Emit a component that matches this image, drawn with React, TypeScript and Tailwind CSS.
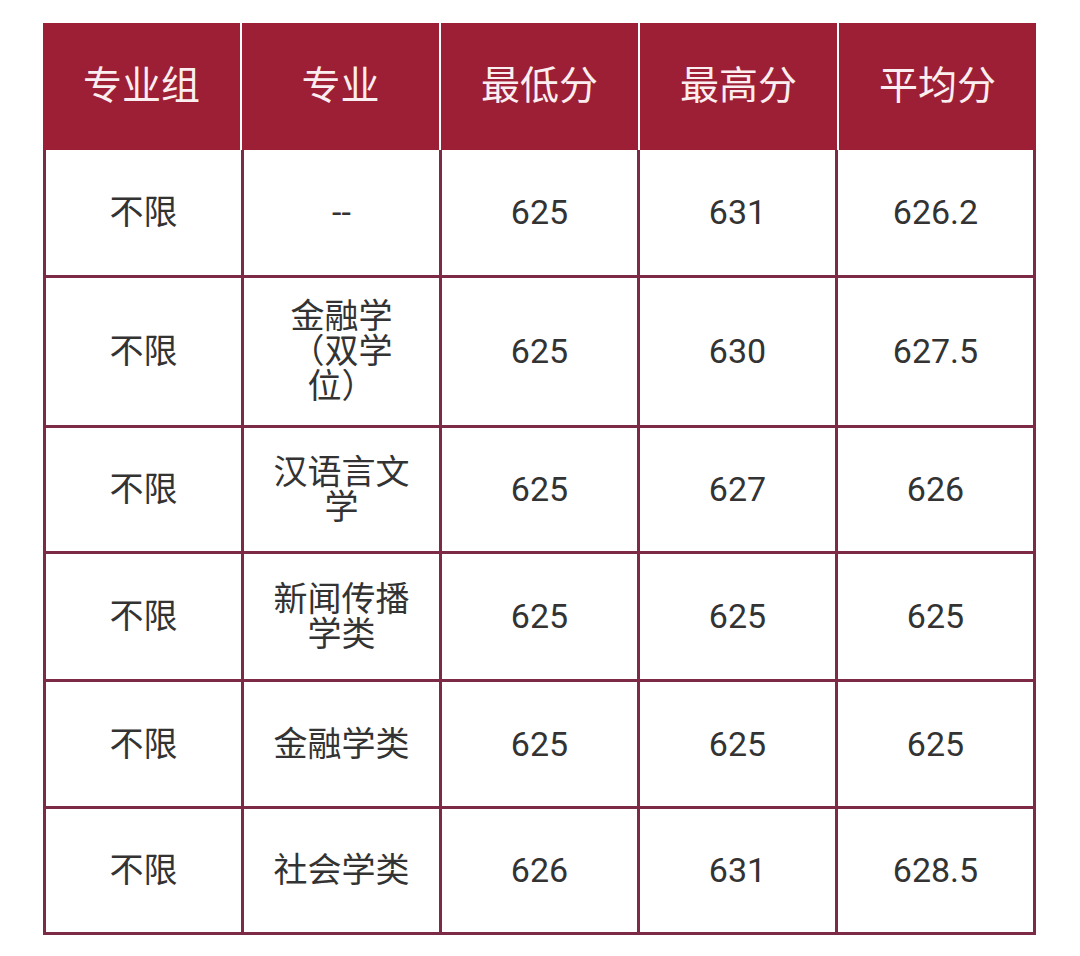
const headers = ["专业组", "专业", "最低分", "最高分", "平均分"];

const rows = [
  { h: "h-[125px]", cells: ["不限", "--", "625", "631", "626.2"] },
  { h: "h-[147px]", cells: ["不限", "金融学（双学位）", "625", "630", "627.5"] },
  { h: "h-[123px]", cells: ["不限", "汉语言文学", "625", "627", "626"] },
  { h: "h-[125px]", cells: ["不限", "新闻传播学类", "625", "625", "625"] },
  { h: "h-[124px]", cells: ["不限", "金融学类", "625", "625", "625"] },
  { h: "h-[123px]", cells: ["不限", "社会学类", "626", "631", "628.5"] },
];

export default function App() {
  return (
    <div
      className="min-h-screen bg-white pt-[23px] pl-[43px]"
      style={{ fontFamily: "Roboto, 'Noto Sans CJK SC', 'Noto Sans', sans-serif" }}
    >
      <div className="w-[993px]">
        <div className="grid grid-cols-5 gap-[2px] bg-white">
          {headers.map((t) => (
            <div
              key={t}
              className="h-[127px] bg-[#9d1f35] flex items-center justify-center text-[39px] text-[#fbeef0]"
            >
              {t}
            </div>
          ))}
        </div>
        <div className="grid grid-cols-5 gap-[3px] bg-[#7c2a45] px-[3px] pb-[3px]">
          {rows.map((r, i) =>
            r.cells.map((c, j) => (
              <div
                key={`${i}-${j}`}
                className={`${r.h} bg-white flex items-center justify-center text-center px-[28px] text-[34px] leading-[35px] text-[#333333]`}
              >
                {c}
              </div>
            ))
          )}
        </div>
      </div>
    </div>
  );
}
